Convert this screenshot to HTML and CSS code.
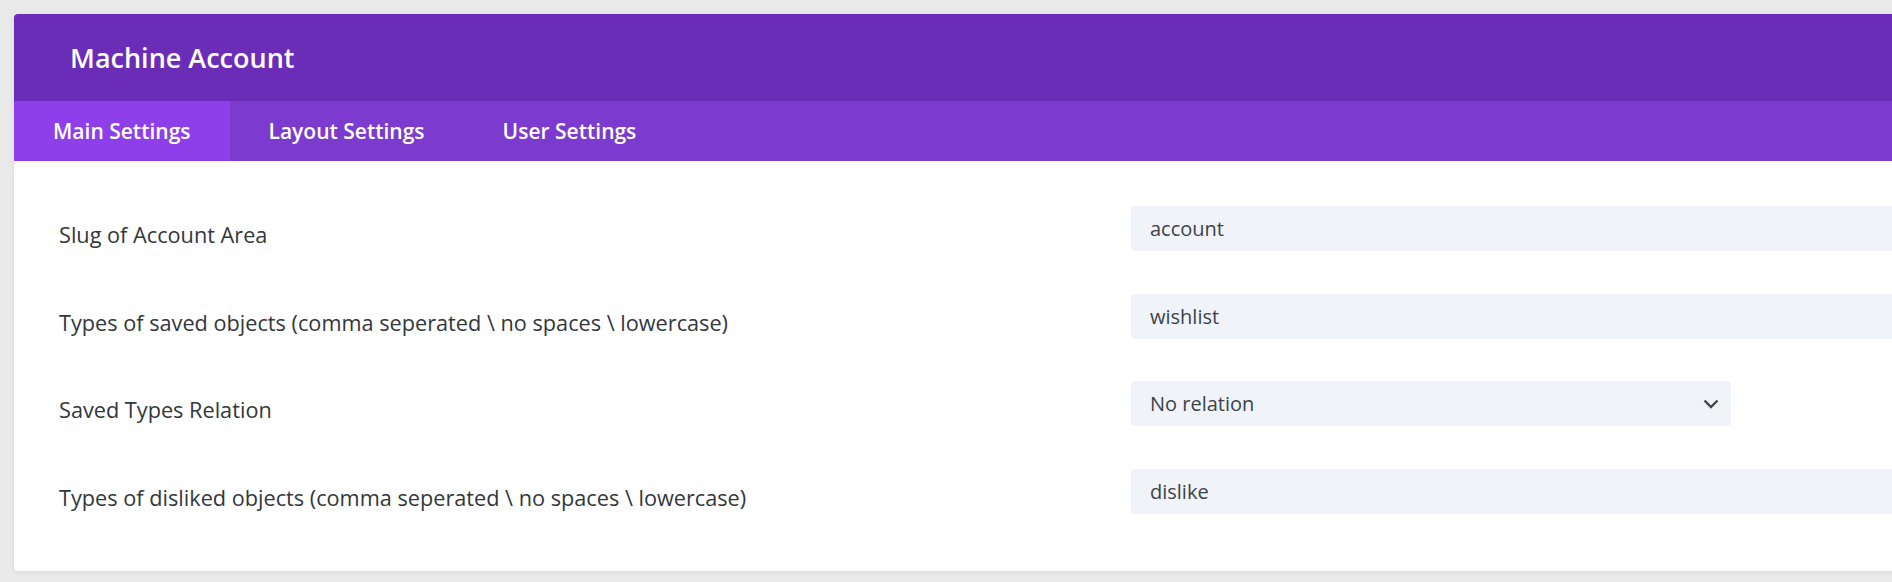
FILE: index.html
```html
<!DOCTYPE html>
<html>
<head>
    <title>Machine Account</title>
    <link rel="stylesheet" href="styles.css">
</head>
<body>
    <div class="settings-card">
        <div class="card-header">
            <h1 class="card-title">Machine Account</h1>
        </div>

        <div class="tab-bar">
            <button class="tab-btn active">Main Settings</button>
            <button class="tab-btn">Layout Settings</button>
            <button class="tab-btn">User Settings</button>
        </div>

        <div class="settings-body">
            <div class="setting-row">
                <label class="setting-label">Slug of Account Area</label>
                <input type="text" class="setting-input" value="account">
            </div>

            <div class="setting-row">
                <label class="setting-label">Types of saved objects (comma seperated \ no spaces \ lowercase)</label>
                <input type="text" class="setting-input" value="wishlist">
            </div>

            <div class="setting-row">
                <label class="setting-label">Saved Types Relation</label>
                <div class="setting-select">
                    <span>No relation</span>
                    <svg class="select-arrow" width="16" height="10" viewBox="0 0 16 10">
                        <polyline points="1.5,1.5 8,8 14.5,1.5" fill="none" stroke="#454545" stroke-width="2.4"/>
                    </svg>
                </div>
            </div>

            <div class="setting-row">
                <label class="setting-label">Types of disliked objects (comma seperated \ no spaces \ lowercase)</label>
                <input type="text" class="setting-input" value="dislike">
            </div>
        </div>
    </div>
</body>
</html>
```

FILE: styles.css
```css
:root {
    --page-bg: #e9e9e9;
    --header-bg: #6b2db8;
    --tabs-bg: #7c3ace;
    --tab-active: #8e3fe9;
    --label-color: #32373c;
    --input-bg: #f0f3f8;
    --input-color: #3c434a;
}

html, body {
    margin: 0;
    height: 100%;
    overflow: hidden;
}

body {
    padding: 14px 0 0 14px;
    box-sizing: border-box;
    background: var(--page-bg);
    font-family: 'Open Sans', 'Noto Sans', sans-serif;
}

.settings-card {
    width: 2100px;
    background: white;
    border-radius: 4px;
    box-shadow: 0 1px 4px rgba(0,0,0,0.08);
    overflow: hidden;
}

.card-header {
    height: 87px;
    display: flex;
    align-items: center;
    padding-left: 56px;
    background: var(--header-bg);
}

.card-title {
    margin: 0;
    color: white;
    font-size: 27px;
    font-weight: 600;
}

.tab-bar {
    display: flex;
    height: 60px;
    background: var(--tabs-bg);
}

.tab-btn {
    padding: 0 39px;
    border: none;
    background: transparent;
    color: white;
    font-family: inherit;
    font-size: 21px;
    font-weight: 600;
    cursor: pointer;
}

.tab-btn.active {
    background: var(--tab-active);
}

.settings-body {
    display: flex;
    flex-direction: column;
    gap: 42.5px;
    padding: 45px 0 57px 45px;
}

.setting-row {
    display: grid;
    grid-template-columns: 1072px 1fr;
    align-items: start;
    height: 45px;
}

.setting-label {
    padding-top: 15px;
    line-height: 27px;
    color: var(--label-color);
    font-size: 21.7px;
    font-weight: 500;
}

.setting-input,
.setting-select {
    height: 45px;
    box-sizing: border-box;
    padding: 0 19px;
    border: none;
    border-radius: 4px;
    background: var(--input-bg);
    color: var(--input-color);
    font-family: inherit;
    font-size: 20px;
}

.setting-input:focus {
    outline: none;
}

.setting-select {
    width: 600px;
    display: flex;
    align-items: center;
    justify-content: space-between;
    padding-right: 12px;
}
```
